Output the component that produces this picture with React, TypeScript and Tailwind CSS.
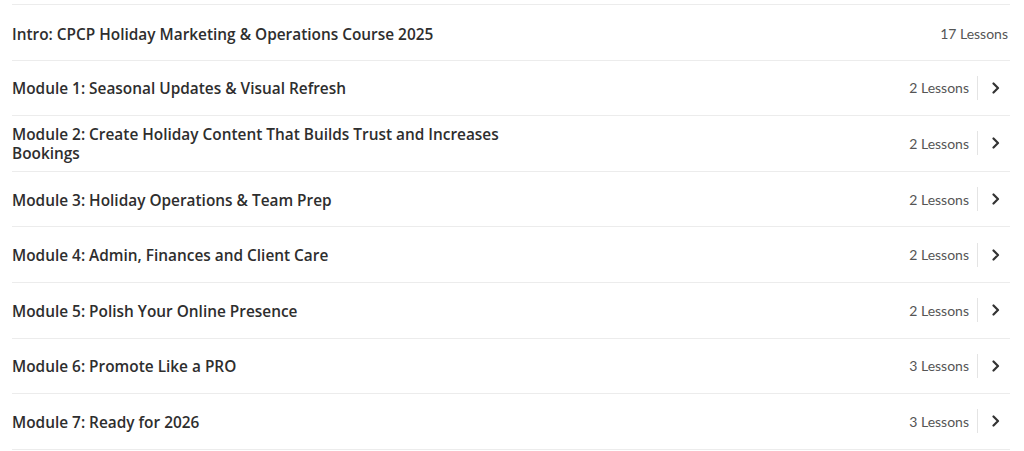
type Module = {
  title: string;
  lessons: number;
};

const modules: Module[] = [
  { title: "Module 1: Seasonal Updates & Visual Refresh", lessons: 2 },
  {
    title:
      "Module 2: Create Holiday Content That Builds Trust and Increases Bookings",
    lessons: 2,
  },
  { title: "Module 3: Holiday Operations & Team Prep", lessons: 2 },
  { title: "Module 4: Admin, Finances and Client Care", lessons: 2 },
  { title: "Module 5: Polish Your Online Presence", lessons: 2 },
  { title: "Module 6: Promote Like a PRO", lessons: 3 },
  { title: "Module 7: Ready for 2026", lessons: 3 },
];

export default function App() {
  return (
    <main className="min-h-screen bg-white pt-[4px] pl-[12px] pr-[14px]">
      <div className="border-t border-[#ececec]">
        <div className="flex h-[55.6px] items-center justify-between border-b border-[#ececec] pr-[2px] pt-[3px]">
          <h2 className="mt-[2px] font-['Open_Sans',sans-serif] text-[15.4px] font-semibold text-[#2e2e2e]">
            Intro: CPCP Holiday Marketing &amp; Operations Course 2025
          </h2>
          <span className="font-['Lato',sans-serif] text-[14px] text-[#555555]">
            17 Lessons
          </span>
        </div>

        {modules.map((m) => (
          <div
            key={m.title}
            className="flex h-[55.6px] items-center justify-between border-b border-[#ececec]"
          >
            <h2 className="mt-[2px] max-w-[520px] font-['Open_Sans',sans-serif] text-[15.4px] leading-[19px] font-semibold text-[#2e2e2e]">
              {m.title}
            </h2>
            <div className="flex items-center">
              <span className="font-['Lato',sans-serif] text-[14px] text-[#555555]">
                {m.lessons} Lessons
              </span>
              <span className="ml-[8px] mr-[13px] h-[24px] w-px bg-[#e4e4e4]" />
              <svg
                width="10"
                height="12"
                viewBox="0 0 10 12"
                className="mr-[9px]"
                fill="none"
              >
                <path
                  d="M2.5 1.5 L7 6 L2.5 10.5"
                  stroke="#333333"
                  strokeWidth="2.2"
                  strokeLinecap="round"
                  strokeLinejoin="round"
                />
              </svg>
            </div>
          </div>
        ))}
      </div>
    </main>
  );
}
